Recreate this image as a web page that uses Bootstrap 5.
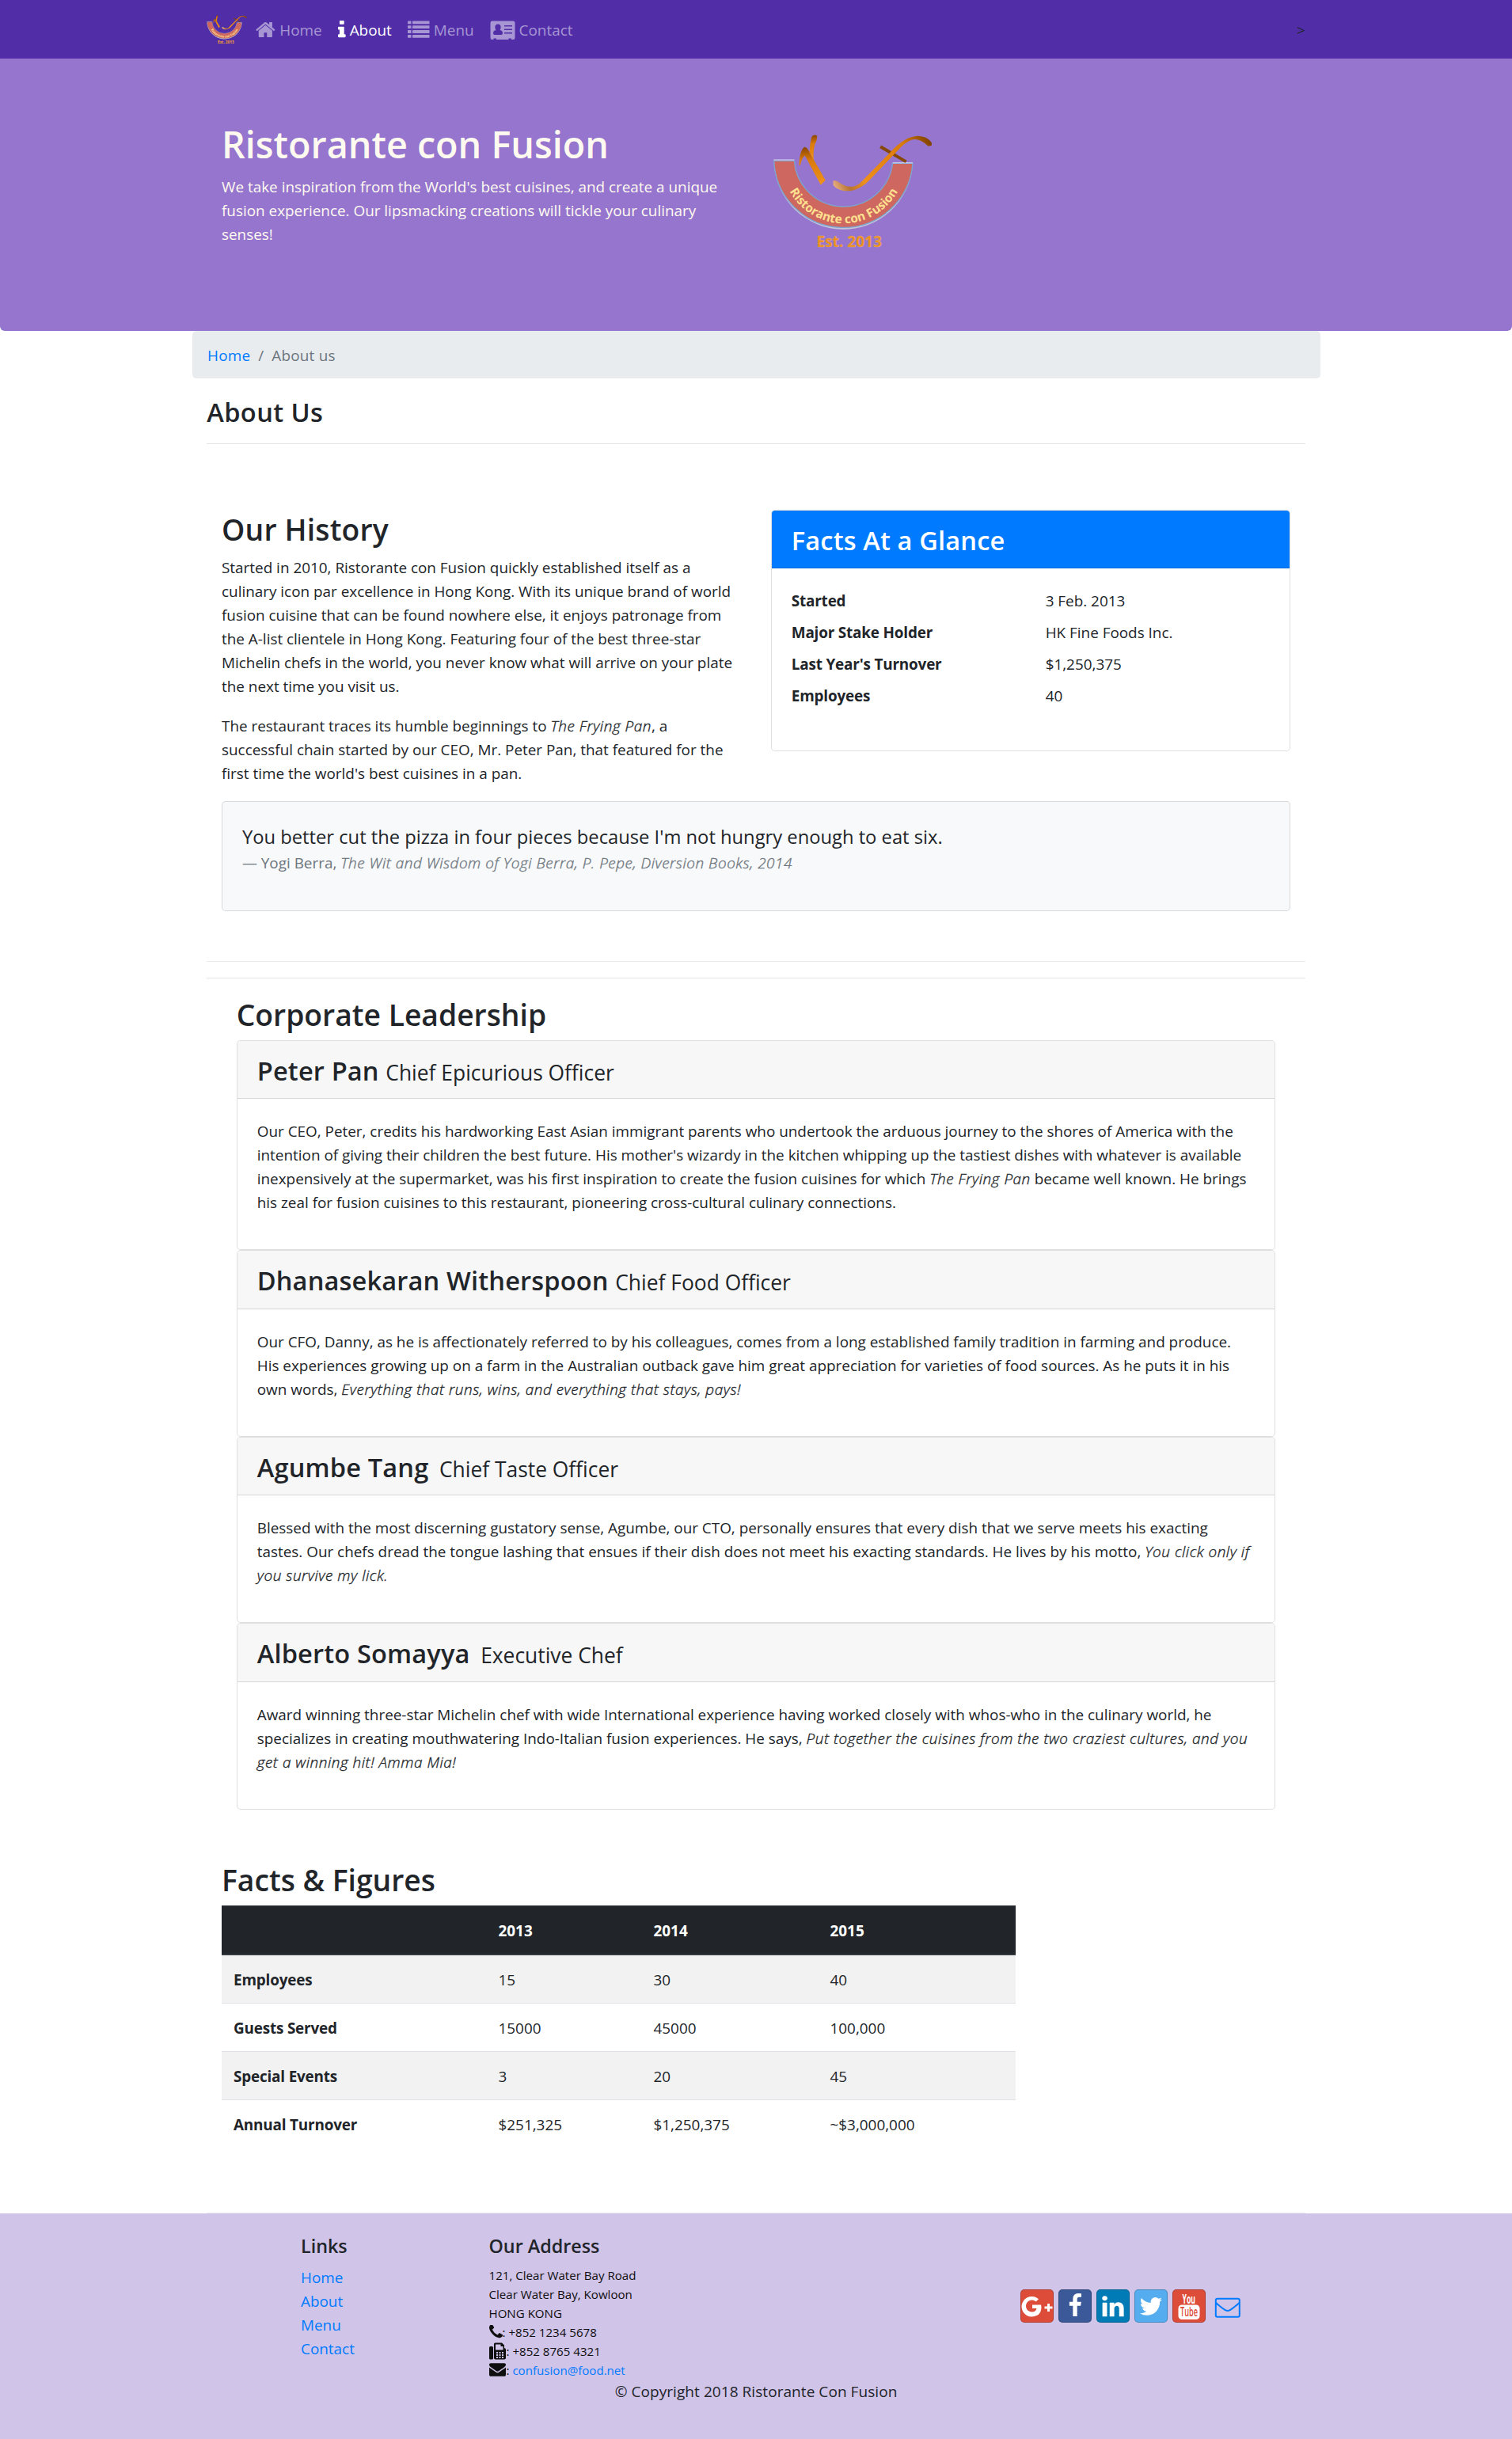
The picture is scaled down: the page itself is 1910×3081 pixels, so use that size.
<!DOCTYPE html>
<html lang="en">
<head>
<meta charset="utf-8">
<meta name="viewport" content="width=device-width, initial-scale=1">
<title>Ristorante Con Fusion: About Us</title>
<link href="https://cdn.jsdelivr.net/npm/bootstrap@5.3.0/dist/css/bootstrap.min.css" rel="stylesheet">
<style>
html{font-size:20px}
body{font-family:"Open Sans","Noto Sans",sans-serif;font-size:18.9px;line-height:30px;color:#212529;background:#fff}
a{color:#007bff;text-decoration:none}
.container{max-width:1425px;padding-left:18.75px;padding-right:18.75px}
.row{--bs-gutter-x:37.5px}
.row-content{margin:0;padding:62.5px 0;border-bottom:1px solid #ebebeb}
p{padding-top:1px;margin-bottom:19px}
em,cite{font-weight:300;line-height:1;letter-spacing:.55px;-webkit-text-stroke:.35px currentColor}
h1,h2,h3,h5{font-weight:600;line-height:1.2}
h1{font-size:46.7px;line-height:60px;margin:0 0 8px;padding-top:3px}
h2{font-size:37.25px;line-height:48px;padding-top:2px;margin-bottom:8px}
h3{font-size:32.6px;line-height:42px;padding-top:2px;margin:0 0 -2px;letter-spacing:.15px}
h5{font-size:23.3px;line-height:30px;padding-top:1px;margin-bottom:9px}
hr{margin:20px 0;border-top:1px solid #000;opacity:.1}
.topbar{background:#512da8;height:74px;padding:1px 0 0}
.topbar .nav-link{padding:0 10px;line-height:30px;color:rgba(255,255,255,.5)!important;display:flex;align-items:center}
.topbar .nav-link.active{color:#fff!important}
.topbar svg{flex:none;fill:currentColor}
.brand{margin-right:0;line-height:0}
.hero{background:#9575cd;color:#fffaf0;height:344px;padding-top:75.4px;border-radius:0 0 6px 6px}
.hero .inner{padding:0 18.75px}
.hero-logo{display:block;margin:19.5px 0 0 2px}
.crumbs{background:#e9ecef;border-radius:5px;height:60px;padding:16px 19.5px 0;margin:0 -18.75px 20px;--bs-breadcrumb-item-active-color:#6c757d;--bs-breadcrumb-divider-color:#6c757d;letter-spacing:.2px}
.crumbs li+li::before{padding:0 10px 0 0}
.page-title{letter-spacing:.4px}
.history h2{padding-top:1px;margin-bottom:8.5px;letter-spacing:.2px}
.history{padding-bottom:.5px}
.card{border:1px solid rgba(0,0,0,.125);border-radius:5px;--bs-card-inner-border-radius:4px;background:#fff}
.card-header{padding:15px 25px;background:#f7f7f7;border-bottom:1px solid rgba(0,0,0,.125)}
.card-body{padding:25px}
.facts .card-header{background:#007bff;color:#fff;padding:17px 25px 13px}
dl{margin-bottom:20px}
dt,dd{margin-bottom:10px;padding-top:2px;line-height:28px}
b,dt,th{font-weight:700;letter-spacing:-.18px}
.quote{background:#f8f9fa;color:#212529}
.quote p{font-size:23.74px;line-height:37.5px;margin:0 0 -1px;padding:1px 0 0}
.quote footer{color:#6c757d;height:30px;margin-bottom:20px}
.leaders{padding:0 37.5px 0;margin:0 0 0}
.leaders .card-header h3{height:42.6px;margin:0;white-space:nowrap}
.leaders h3 small{font-size:26.4px;line-height:1;font-weight:400;letter-spacing:0}
.leaders .card-body{padding-bottom:45px}
.leaders .card-body p{margin-bottom:-1px}
.figures{--bs-table-striped-bg:#f2f2f2;margin-bottom:20px;table-layout:fixed}
.figures th,.figures td{padding:16px 15px 14px;border:0;border-top:1px solid #dee2e6;line-height:30px}
.figures>thead>tr>th{background:#212529;color:#fff;border-top:1px solid #32383e;border-bottom:2px solid #32383e;letter-spacing:0}
.figures tbody tr:first-child>*{border-top:0}
.figures-block{padding-top:63px}
.sitefoot{background:#d1c4e9;height:285px;padding-top:25px}
.sitefoot li{padding-top:1px;margin-bottom:-1px}
.addr{font-size:15.1px;color:#0f0f0f}
.addr>div{height:24px;line-height:24px;padding-top:1px;display:flex;align-items:center;white-space:pre}
.addr svg{flex:none;fill:#0f0f0f}
.social{gap:6px;padding:70.500px 3px 0 0}
.sq{width:42px;height:42px;border:1px solid rgba(0,0,0,.2);border-radius:5px;display:block}
.sq svg{display:block;width:40px;height:40px;fill:#fff;overflow:visible}
.copy{font-size:19px;letter-spacing:.06px}
.gp,.yt{background:#dd4b39}.fb{background:#3b5998}.li{background:#007bb6}.tw{background:#55acee}
</style>
</head>
<body>
<svg width="0" height="0" class="position-absolute" aria-hidden="true">
<defs>
<linearGradient id="gold" x1="0" y1="0" x2="0" y2="1"><stop offset="0" stop-color="#8a4500"/><stop offset=".35" stop-color="#d97a0c"/><stop offset="1" stop-color="#f0921c"/></linearGradient>
<linearGradient id="goldf" gradientUnits="userSpaceOnUse" x1="280" y1="260" x2="650" y2="80"><stop offset="0" stop-color="#e9b184"/><stop offset=".13" stop-color="#b87432"/><stop offset=".28" stop-color="#ef901c"/><stop offset=".75" stop-color="#d97a0c"/><stop offset="1" stop-color="#7c3f00"/></linearGradient>
<path id="bowl" d="M86 164A233 233 0 0 0 552 164"/>
<symbol id="logo" viewBox="50 58 605 440">
<path d="M55 162H132A187 187 0 0 0 504 172H580A263 263 0 0 1 55 162Z" transform="translate(0 5)" fill="#c3c6da"/>
<path d="M55 160H132A187 187 0 0 0 504 170H580A263 263 0 0 1 55 160Z" fill="#cd675f" stroke="#7ba3cf" stroke-width="4"/>
<path d="M54 157H132M504 168H580" stroke="#dde3f0" stroke-width="3"/>
<path d="M150 177C151 145 158 113 171 108Q180 109 184 118L250 234L232 251L172 140Q160 150 155 176Z" fill="url(#gold)"/>
<path d="M196 75Q198 62 212 62L219 66L216 84Q202 108 205 157L190 128Q190 98 196 75Z" fill="url(#gold)"/>
<path d="M461 101L558 159L552 168L455 112Z" fill="#874706"/>
<path d="M279 236Q289 232 303 243Q343 271 378 247L495 128Q550 67 600 66Q635 67 652 92L651 103L638 104Q610 78 586 79Q564 80 535 109L426 223Q375 280 320 274Q290 269 279 252Z" fill="url(#goldf)"/>
<text font-family="Open Sans" font-weight="700" font-size="46" fill="#ffe08e"><textPath href="#bowl" startOffset="50%" text-anchor="middle" textLength="500">Ristorante con Fusion</textPath></text>
<text x="216" y="487" font-family="Open Sans" font-weight="700" font-size="57" fill="#ee8d16" stroke="#dca98a" stroke-width="1.500" textLength="247">Est. 2013</text>
</symbol>
</defs>
</svg>

<nav class="navbar navbar-expand topbar">
<div class="container">
<a class="brand" href="#"><svg width="51" height="37"><use href="#logo" width="51" height="37"/></svg></a>
<ul class="navbar-nav">
<li class="nav-item"><a class="nav-link" href="#"><svg width="31" height="27" viewBox="0 0 2081 1792"><path d="M1472 992v480q0 26-19 45t-45 19h-384v-384h-256v384h-384q-26 0-45-19t-19-45v-480q0-1 .5-3t.5-3l575-474 575 474q1 2 1 6zm223-69l-62 74q-8 9-21 11h-3q-13 0-21-7l-692-577-692 577q-12 8-24 7-13-2-21-11l-62-74q-8-10-7-23.500t11-21.500l719-599q32-26 76-26t76 26l244 204v-195q0-14 9-23t23-9h192q14 0 23 9t9 23v408l219 182q10 8 11 21.500t-7 23.500z"/></svg>Home</a></li>
<li class="nav-item"><a class="nav-link active" href="#"><svg width="15" height="27" viewBox="576 0 995 1792"><path d="M1216 1344v128q0 26-19 45t-45 19h-512q-26 0-45-19t-19-45v-128q0-26 19-45t45-19h64v-384h-64q-26 0-45-19t-19-45v-128q0-26 19-45t45-19h384q26 0 45 19t19 45v576h64q26 0 45 19t19 45zm-128-1152v192q0 26-19 45t-45 19h-256q-26 0-45-19t-19-45v-192q0-26 19-45t45-19h256q26 0 45 19t19 45z"/></svg>About</a></li>
<li class="nav-item"><a class="nav-link" href="#"><svg width="33" height="23" viewBox="0 0 33 23"><g><rect y=".5" width="4.500" height="3.800" rx=".5"/><rect y="6.300" width="4.500" height="3.800" rx=".5"/><rect y="12.100" width="4.500" height="3.800" rx=".5"/><rect y="17.900" width="4.500" height="3.800" rx=".5"/><rect x="6" y=".5" width="21.500" height="3.800" rx=".5"/><rect x="6" y="6.300" width="21.500" height="3.800" rx=".5"/><rect x="6" y="12.100" width="21.500" height="3.800" rx=".5"/><rect x="6" y="17.900" width="21.500" height="3.800" rx=".5"/></g></svg>Menu</a></li>
<li class="nav-item"><a class="nav-link" href="#"><svg width="37" height="24" viewBox="0 0 37 24"><path fill-rule="evenodd" d="M2.500 .500H29Q31.500 .500 31.500 3V21.500Q31.500 24 29 24H27V22.500H23.500V24H8V22.500H4.500V24H2.500Q.500 24 .500 21.500V3Q.500 .500 2.500 .500ZM10 4.500C7 4.500 6 7 6.500 9.500Q7 11.500 7.500 12Q4 12.500 4 16Q4 18 6 18H14Q16 18 16 16Q16 12.500 12.500 12Q13 11.500 13.500 9.500C14 7 13 4.500 10 4.500ZM18 6V7.500H28V6ZM18 10.500V12H28V10.500ZM18 15V16.500H28V15Z"/></svg>Contact</a></li>
</ul>
<span class="ms-auto">&gt;</span>
</div>
</nav>

<header class="hero">
<div class="container"><div class="inner"><div class="row">
<div class="col-6 text-nowrap">
<h1>Ristorante con Fusion</h1>
<p>We take inspiration from the World's best cuisines, and create a unique<br>fusion experience. Our lipsmacking creations will tickle your culinary<br>senses!</p>
</div>
<div class="col-6"><svg class="hero-logo" width="202" height="147"><use href="#logo" width="202" height="147"/></svg></div>
</div></div></div>
</header>

<main class="container text-nowrap">
<ol class="breadcrumb crumbs"><li class="breadcrumb-item"><a href="#">Home</a></li><li class="breadcrumb-item active">About us</li></ol>
<h3 class="page-title">About Us</h3>
<hr>

<div class="row-content"><div class="row mx-0">
<div class="col-6 history">
<h2>Our History</h2>
<p>Started in 2010, Ristorante con Fusion quickly established itself as a<br>culinary icon par excellence in Hong Kong. With its unique brand of world<br>fusion cuisine that can be found nowhere else, it enjoys patronage from<br>the A-list clientele in Hong Kong. Featuring four of the best three-star<br>Michelin chefs in the world, you never know what will arrive on your plate<br>the next time you visit us.</p>
<p>The restaurant traces its humble beginnings to <em>The Frying Pan</em>, a<br>successful chain started by our CEO, Mr. Peter Pan, that featured for the<br>first time the world's best cuisines in a pan.</p>
</div>
<div class="col-6">
<div class="card facts">
<h3 class="card-header mb-0">Facts At a Glance</h3>
<div class="card-body"><dl class="row">
<dt class="col-6">Started</dt><dd class="col-6">3 Feb. 2013</dd>
<dt class="col-6">Major Stake Holder</dt><dd class="col-6">HK Fine Foods Inc.</dd>
<dt class="col-6">Last Year's Turnover</dt><dd class="col-6">$1,250,375</dd>
<dt class="col-6">Employees</dt><dd class="col-6">40</dd>
</dl></div>
</div>
</div>
<div class="col-12">
<div class="card quote"><div class="card-body"><blockquote class="mb-0">
<p>You better cut the pizza in four pieces because I'm not hungry enough to eat six.</p>
<footer>— Yogi Berra, <cite>The Wit and Wisdom of Yogi Berra, P. Pepe, Diversion Books, 2014</cite></footer>
</blockquote></div></div>
</div>
</div></div>
<hr>

<section class="leaders">
<h2>Corporate Leadership</h2>
<div class="card"><div class="card-header"><h3>Peter Pan <small>Chief Epicurious Officer</small></h3></div>
<div class="card-body"><p>Our CEO, Peter, credits his hardworking East Asian immigrant parents who undertook the arduous journey to the shores of America with the<br>intention of giving their children the best future. His mother's wizardy in the kitchen whipping up the tastiest dishes with whatever is available<br>inexpensively at the supermarket, was his first inspiration to create the fusion cuisines for which <em>The Frying Pan</em> became well known. He brings<br>his zeal for fusion cuisines to this restaurant, pioneering cross-cultural culinary connections.</p></div></div>
<div class="card"><div class="card-header"><h3>Dhanasekaran Witherspoon <small>Chief Food Officer</small></h3></div>
<div class="card-body"><p>Our CFO, Danny, as he is affectionately referred to by his colleagues, comes from a long established family tradition in farming and produce.<br>His experiences growing up on a farm in the Australian outback gave him great appreciation for varieties of food sources. As he puts it in his<br>own words, <em>Everything that runs, wins, and everything that stays, pays!</em></p></div></div>
<div class="card"><div class="card-header"><h3>Agumbe Tang <small class="ms-1">Chief Taste Officer</small></h3></div>
<div class="card-body"><p>Blessed with the most discerning gustatory sense, Agumbe, our CTO, personally ensures that every dish that we serve meets his exacting<br>tastes. Our chefs dread the tongue lashing that ensues if their dish does not meet his exacting standards. He lives by his motto, <em>You click only if<br>you survive my lick.</em></p></div></div>
<div class="card"><div class="card-header"><h3>Alberto Somayya <small class="ms-1">Executive Chef</small></h3></div>
<div class="card-body"><p>Award winning three-star Michelin chef with wide International experience having worked closely with whos-who in the culinary world, he<br>specializes in creating mouthwatering Indo-Italian fusion experiences. He says, <em>Put together the cuisines from the two craziest cultures, and you<br>get a winning hit! Amma Mia!</em></p></div></div>
</section>

<div class="row-content figures-block"><div class="row mx-0"><div class="col-9">
<h2>Facts &amp; Figures</h2>
<table class="table table-striped figures">
<colgroup><col style="width:334.5px"><col style="width:196px"><col style="width:223px"><col></colgroup>
<thead><tr><th>&nbsp;</th><th>2013</th><th>2014</th><th>2015</th></tr></thead>
<tbody>
<tr><th>Employees</th><td>15</td><td>30</td><td>40</td></tr>
<tr><th>Guests Served</th><td>15000</td><td>45000</td><td>100,000</td></tr>
<tr><th>Special Events</th><td>3</td><td>20</td><td>45</td></tr>
<tr><th>Annual Turnover</th><td>$251,325</td><td>$1,250,375</td><td>~$3,000,000</td></tr>
</tbody>
</table>
</div></div></div>
</main>

<footer class="sitefoot">
<div class="container">
<div class="row">
<div class="col-2 offset-1">
<h5>Links</h5>
<ul class="list-unstyled mb-0"><li><a href="#">Home</a></li><li><a href="#">About</a></li><li><a href="#">Menu</a></li><li><a href="#">Contact</a></li></ul>
</div>
<div class="col-5">
<h5>Our Address</h5>
<address class="addr mb-0">
<div>121, Clear Water Bay Road</div>
<div>Clear Water Bay, Kowloon</div>
<div>HONG KONG</div>
<div><svg width="17" height="17" viewBox="192 192 1408 1408"><path d="M1600 1240q0 27-10 70.500t-21 68.500q-21 50-122 106-94 51-186 51-27 0-53-3.500t-57.500-12.500-47-14.500-55.500-20.500-49-18q-98-35-175-83-127-79-264-216t-216-264q-48-77-83-175-3-9-18-49t-20.500-55.500-14.500-47-12.500-57.500-3.500-53q0-92 51-186 56-101 106-122 25-11 68.500-21t70.500-10q14 0 21 3 18 6 53 76 11 19 30 54t35 63.500 31 53.500q3 4 17.500 25t21.500 35.500 7 28.500q0 20-28.500 50t-62 55-62 53-28.500 46q0 9 5 22.500t8.500 20.500 14 24 11.500 19q76 137 174 235t235 174q2 1 19 11.500t24 14 20.500 8.500 22.500 5q18 0 46-28.500t53-62 55-62 50-28.500q14 0 28.500 7t35.500 21.500 25 17.500q25 15 53.500 31t63.500 35 54 30q70 35 76 53 3 7 3 21z"/></svg>: +852 1234 5678</div>
<div><svg width="22" height="22" viewBox="0 0 22 22"><path fill-rule="evenodd" d="M1.500 5H3.500Q5 5 5 6.500V20Q5 21.500 3.500 21.500H1.500Q0 21.500 0 20V6.500Q0 5 1.500 5ZM7.500 .500H16L19 3.500V7Q21 7.500 21 9V19.500Q21 21.500 19 21.500H8Q6 21.500 6 19.500V2Q6 .500 7.500 .500ZM8 2.500V9.500H17.500V5H14.500V2.500ZM9 12V14H11V12ZM12.500 12V14H14.500V12ZM16 12V14H18V12ZM9 15V17H11V15ZM12.500 15V17H14.500V15ZM16 15V17H18V15ZM9 18V20H11V18ZM12.500 18V20H14.500V18ZM16 18V20H18V18Z"/></svg>: +852 8765 4321</div>
<div><svg width="22" height="17" viewBox="0 240 1877 1450"><path d="M1792 710v794q0 66-47 113t-113 47h-1472q-66 0-113-47t-47-113v-794q44 49 101 87 362 246 497 345 57 42 92.500 65.500t94.500 48 110 24.500h2q51 0 110-24.500t94.500-48 92.500-65.500q170-123 498-345 57-39 100-87zm0-294q0 79-49 151t-122 123q-376 261-468 325-10 7-42.500 31t-54 38.500-52 32.500-57.500 27-50 9h-2q-23 0-50-9t-57.500-27-52-32.500-54-38.500-42.500-31q-91-64-262-182.500t-205-142.500q-62-42-117-115.500t-55-136.500q0-78 41.500-130t118.500-52h1472q65 0 112.500 47t47.500 113z"/></svg>: <a href="#">confusion@food.net</a></div>
</address>
</div>
<div class="col-4">
<div class="social d-flex justify-content-center align-items-start">
<a class="sq gp" href="#"><svg viewBox="0 0 40 40"><path d="M24 18.500H14V23H19.500Q18.500 27.500 13.500 27.500A7.500 7.500 0 1 1 18.700 14.600L22 11.300A12.800 12.800 0 1 0 13 33.500Q25 33 25.500 22Q25.400 20 25 18.500ZM33 17V20.500H29.500V23.500H33V27H36V23.500H39.500V20.500H36V17Z"/></svg></a>
<a class="sq fb" href="#"><svg viewBox="0 0 40 40"><path transform="translate(4.500 4) scale(.0175)" d="M1343 12v264h-157q-86 0-116 36t-30 108v189h293l-39 296h-254v759h-306v-759h-255v-296h255v-218q0-186 104-288.500t277-102.500q147 0 228 12z"/></svg></a>
<a class="sq li" href="#"><svg viewBox="0 0 40 40"><path transform="translate(4 4.500) scale(.0178)" d="M477 625v991h-330v-991h330zm21-306q1 73-50.500 122t-135.500 49h-2q-82 0-132-49t-50-122q0-74 51.500-122.500t134.500-48.500 133 48.500 51 122.500zm1166 729v568h-329v-530q0-105-40.500-164.500t-126.500-59.500q-63 0-105.500 34.500t-63.500 85.500q-11 30-11 81v553h-329q2-399 2-647t-1-296l-1-48h329v144h-2q20-32 41-56t56.500-52 87-43.500 114.500-15.500q171 0 275 113.500t104 332.500z"/></svg></a>
<a class="sq tw" href="#"><svg viewBox="0 0 40 40"><path transform="translate(4 4.500) scale(.0178)" d="M1684 408q-67 98-162 167 1 14 1 42 0 130-38 259.500t-115.500 248.500-184.500 210.500-258 146-323 54.500q-271 0-496-145 35 4 78 4 225 0 401-138-105-2-188-64.500t-114-159.500q33 5 61 5 43 0 85-11-112-23-185.500-111.500t-73.500-205.500v-4q68 38 146 41-66-44-105-115t-39-154q0-88 44-163 121 149 294.500 238.500t371.500 99.500q-8-38-8-74 0-134 94.500-228.500t228.500-94.500q140 0 236 102 109-21 205-78-37 115-142 178 93-10 186-50z"/></svg></a>
<a class="sq yt" href="#"><svg viewBox="0 0 40 40"><text x="11.500" y="16.800" font-family="Open Sans" font-weight="700" font-size="15.500" textLength="16.500" lengthAdjust="spacingAndGlyphs">You</text><rect x="6.500" y="18.500" width="27" height="18.500" rx="4.500"/><text x="9" y="33" font-family="Open Sans" font-weight="600" font-size="15.500" fill="#dd4b39" textLength="22" lengthAdjust="spacingAndGlyphs">Tube</text></svg></a>
<a class="ms-1" href="#"><svg class="d-block mt-2" width="34" height="27" viewBox="0 0 34 27" fill="none" stroke="#007bff" stroke-width="2"><rect x="1.800" y="1.800" width="30" height="23" rx="2"/><path d="M2 7Q4 9 8 12Q14 17 16.800 17T25.500 12Q29.500 9 31.500 7"/></svg></a>
</div>
</div>
</div>
<p class="copy text-center mb-0">© Copyright 2018 Ristorante Con Fusion</p>
</div>
</footer>
<script src="https://cdn.jsdelivr.net/npm/bootstrap@5.3.0/dist/js/bootstrap.bundle.min.js"></script>
</body>
</html>
